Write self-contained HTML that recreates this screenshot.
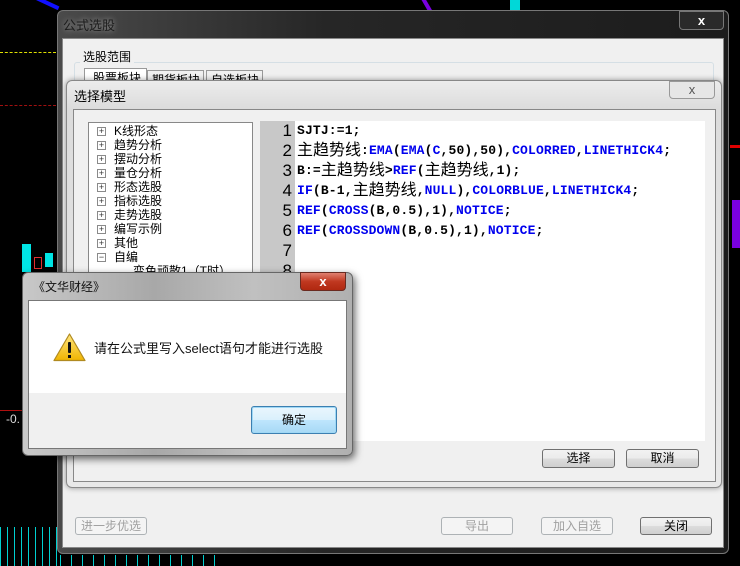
<!DOCTYPE html>
<html><head><meta charset="utf-8"><style>
*{margin:0;padding:0;box-sizing:border-box}
body{width:740px;height:566px;background:#000;position:relative;overflow:hidden;font-family:"Liberation Sans","Noto Sans CJK SC",sans-serif;font-size:12px;color:#000}
.a{position:absolute}
.btn{position:absolute;border:1px solid #707070;border-radius:3px;background:linear-gradient(#f2f2f2,#ebebeb 50%,#dddddd 50%,#cfcfcf);text-align:center;font-size:12px;line-height:17px}
.dis{color:#a0a0a0;border-color:#adb2b5;background:#f4f4f4}
.code{font-family:"Liberation Mono","Noto Sans CJK SC",monospace;font-weight:bold;font-size:13px;letter-spacing:0.15px;color:#000}
.code div{height:20px;line-height:20px;overflow:visible;white-space:pre}
.code .c{font-family:"Noto Sans CJK SC",sans-serif;font-weight:normal;font-size:16px;letter-spacing:0;line-height:10px;vertical-align:-1px}
.b{color:#0000ee}
.num{font-family:"Liberation Sans",sans-serif;font-size:17px;color:#000;text-align:right;width:32px}
.ti{position:absolute;left:0;height:14px;line-height:14px;white-space:nowrap}
.pb{display:inline-block;width:9px;height:9px;border:1px solid #8a8a8a;background:#fff;font-size:9px;line-height:7px;text-align:center;color:#333;vertical-align:middle;margin-right:8px}
</style></head><body>
<!-- chart bits -->
<div class="a" style="left:0;top:52px;width:56px;border-top:1px dashed #e0e000"></div>
<div class="a" style="left:0;top:105px;width:56px;border-top:1px dashed #a01010"></div>
<div class="a" style="left:30px;top:0;width:30px;height:4px;background:#1010ff;transform:rotate(25deg)"></div>
<div class="a" style="left:22px;top:244px;width:9px;height:28px;background:#00e5e5"></div>
<div class="a" style="left:45px;top:253px;width:8px;height:14px;background:#00e5e5"></div>
<div class="a" style="left:34px;top:257px;width:8px;height:12px;border:1px solid #e03030"></div>
<div class="a" style="left:0;top:410px;width:22px;border-top:1px solid #b01010"></div>
<div class="a" style="left:6px;top:412px;color:#ddd;font-size:12px">-0.</div>
<div class="a" style="left:0;top:527px;width:60px;height:39px;background:repeating-linear-gradient(90deg,#00d0d0 0 1px,transparent 1px 7px)"></div>
<div class="a" style="left:60px;top:555px;width:160px;height:11px;background:repeating-linear-gradient(90deg,#00d0d0 0 1px,transparent 1px 11px)"></div>
<div class="a" style="left:732px;top:200px;width:8px;height:48px;background:#7a00e0"></div>
<div class="a" style="left:730px;top:145px;width:10px;height:3px;background:#e00000"></div>
<div class="a" style="left:510px;top:0;width:10px;height:10px;background:#00d8d8"></div>
<div class="a" style="left:410px;top:0;width:30px;height:4px;background:#7a00e0;transform:rotate(60deg)"></div>

<!-- outer window -->
<div class="a" style="left:57px;top:10px;width:672px;height:544px;border:1px solid #777;border-radius:6px;background:linear-gradient(90deg,#4a4a4a,#262626 40%,#1c1c1c);"></div>
<div class="a" style="left:63px;top:15px;font-size:13px;color:#1c1c1c;text-shadow:0 0 6px #aaa">公式选股</div>
<div class="a" style="left:679px;top:11px;width:45px;height:19px;border:1px solid #777;border-radius:0 0 4px 4px;background:#2a2a2a;color:#fff;text-align:center;font-weight:bold;font-size:13px;line-height:17px">x</div>
<div class="a" style="left:62px;top:38px;width:662px;height:510px;background:#f0f0f0;border:1px solid #888"></div>
<div class="a" style="left:74px;top:62px;width:640px;height:174px;border:1px solid #d5dfe5;border-radius:3px"></div>
<div class="a" style="left:80px;top:48px;background:#f0f0f0;padding:0 3px;font-size:12px">选股范围</div>
<div class="a" style="left:84px;top:68px;width:63px;height:20px;border:1px solid #999;background:#fff;padding-left:8px;font-size:12px">股票板块</div>
<div class="a" style="left:147px;top:70px;width:57px;height:18px;border:1px solid #999;background:#f0f0f0;padding-left:4px;font-size:12px">期货板块</div>
<div class="a" style="left:206px;top:70px;width:57px;height:18px;border:1px solid #999;background:#f0f0f0;padding-left:4px;font-size:12px">自选板块</div>
<div class="a" style="left:74px;top:484px;width:640px;height:2px;border-top:1px solid #d5dfe5"></div>

<div class="btn dis" style="left:75px;top:517px;width:72px;height:18px">进一步优选</div>
<div class="btn dis" style="left:441px;top:517px;width:72px;height:18px">导出</div>
<div class="btn dis" style="left:541px;top:517px;width:72px;height:18px">加入自选</div>
<div class="btn" style="left:640px;top:517px;width:72px;height:18px">关闭</div>

<!-- second window -->
<div class="a" style="left:66px;top:80px;width:656px;height:408px;border:1px solid #888;border-radius:6px;background:linear-gradient(#ececec,#dcdcdc 28px,#e8e8e8);box-shadow:0 0 6px rgba(0,0,0,.4)"></div>
<div class="a" style="left:74px;top:86px;font-size:13px">选择模型</div>
<div class="a" style="left:669px;top:81px;width:46px;height:18px;border:1px solid #999;border-radius:0 0 4px 4px;background:#e6e6e6;color:#555;text-align:center;font-size:13px;line-height:16px">x</div>
<div class="a" style="left:73px;top:109px;width:643px;height:373px;background:#f0f0f0;border:1px solid #888"></div>
<div class="a" style="left:88px;top:122px;width:165px;height:160px;background:#fff;border:1px solid #888"></div>
<div class="a" style="left:97px;top:124px;width:150px;font-size:12px">
<div class="ti" style="top:0"><span class="pb">+</span>K线形态</div>
<div class="ti" style="top:14px"><span class="pb">+</span>趋势分析</div>
<div class="ti" style="top:28px"><span class="pb">+</span>摆动分析</div>
<div class="ti" style="top:42px"><span class="pb">+</span>量仓分析</div>
<div class="ti" style="top:56px"><span class="pb">+</span>形态选股</div>
<div class="ti" style="top:70px"><span class="pb">+</span>指标选股</div>
<div class="ti" style="top:84px"><span class="pb">+</span>走势选股</div>
<div class="ti" style="top:98px"><span class="pb">+</span>编写示例</div>
<div class="ti" style="top:112px"><span class="pb">+</span>其他</div>
<div class="ti" style="top:126px"><span class="pb">−</span>自编</div>
<div class="ti" style="top:140px;left:36px">变色顽散1（T时）</div>
</div>
<div class="a" style="left:260px;top:121px;width:445px;height:320px;background:#fff"></div>
<div class="a" style="left:260px;top:121px;width:35px;height:320px;background:#c8c8c8"></div>
<div class="a num" style="left:260px;top:121px;line-height:20px">1<br>2<br>3<br>4<br>5<br>6<br>7<br>8</div>
<div class="a code" style="left:297px;top:121px"><div>SJTJ:=1;</div><div><span class="c">主趋势线</span>:<span class="b">EMA</span>(<span class="b">EMA</span>(<span class="b">C</span>,50),50),<span class="b">COLORRED</span>,<span class="b">LINETHICK4</span>;</div><div>B:=<span class="c">主趋势线</span>&gt;<span class="b">REF</span>(<span class="c">主趋势线</span>,1);</div><div><span class="b">IF</span>(B-1,<span class="c">主趋势线</span>,<span class="b">NULL</span>),<span class="b">COLORBLUE</span>,<span class="b">LINETHICK4</span>;</div><div><span class="b">REF</span>(<span class="b">CROSS</span>(B,0.5),1),<span class="b">NOTICE</span>;</div><div><span class="b">REF</span>(<span class="b">CROSSDOWN</span>(B,0.5),1),<span class="b">NOTICE</span>;</div></div>
<div class="btn" style="left:542px;top:449px;width:73px;height:19px">选择</div>
<div class="btn" style="left:626px;top:449px;width:73px;height:19px">取消</div>

<!-- message box -->
<div class="a" style="left:22px;top:272px;width:331px;height:184px;border:1px solid #666;border-radius:6px;background:linear-gradient(90deg,#c8c8c8,#a8a8a8 40%,#c0c0c0 70%,#b0b0b0);box-shadow:2px 3px 8px rgba(0,0,0,.6)"></div>
<div class="a" style="left:33px;top:278px;font-size:12px;color:#111">《文华财经》</div>
<div class="a" style="left:300px;top:272px;width:46px;height:19px;border:1px solid #6a2a20;border-radius:0 0 4px 4px;background:linear-gradient(#e08070,#c03820 50%,#b02810);color:#fff;text-align:center;font-weight:bold;font-size:13px;line-height:17px">x</div>
<div class="a" style="left:28px;top:300px;width:319px;height:149px;background:#f0f0f0;border:1px solid #777"></div>
<div class="a" style="left:29px;top:301px;width:317px;height:92px;background:#fff"></div>
<svg class="a" style="left:53px;top:333px" width="33" height="29" viewBox="0 0 33 29"><defs><linearGradient id="g" x1="0" y1="0" x2="0" y2="1"><stop offset="0" stop-color="#ffe680"/><stop offset="1" stop-color="#f0b400"/></linearGradient></defs><path d="M16.5 1 L32 27.5 L1 27.5 Z" fill="url(#g)" stroke="#b08a20" stroke-width="1.2" stroke-linejoin="round"/><rect x="15" y="9" width="3" height="11" rx="1" fill="#111"/><rect x="15" y="22" width="3" height="3" fill="#111"/></svg>
<div class="a" style="left:94px;top:338px;font-size:13px;color:#111">请在公式里写入select语句才能进行选股</div>
<div class="a" style="left:251px;top:406px;width:86px;height:28px;border:1px solid #3c7fb1;border-radius:3px;background:linear-gradient(#eaf6fd,#d9f0fc 50%,#bee6fd 50%,#a7d9f5);box-shadow:inset 0 0 0 1px #9fd8f5;text-align:center;line-height:26px;font-size:12px">确定</div>
</body></html>
